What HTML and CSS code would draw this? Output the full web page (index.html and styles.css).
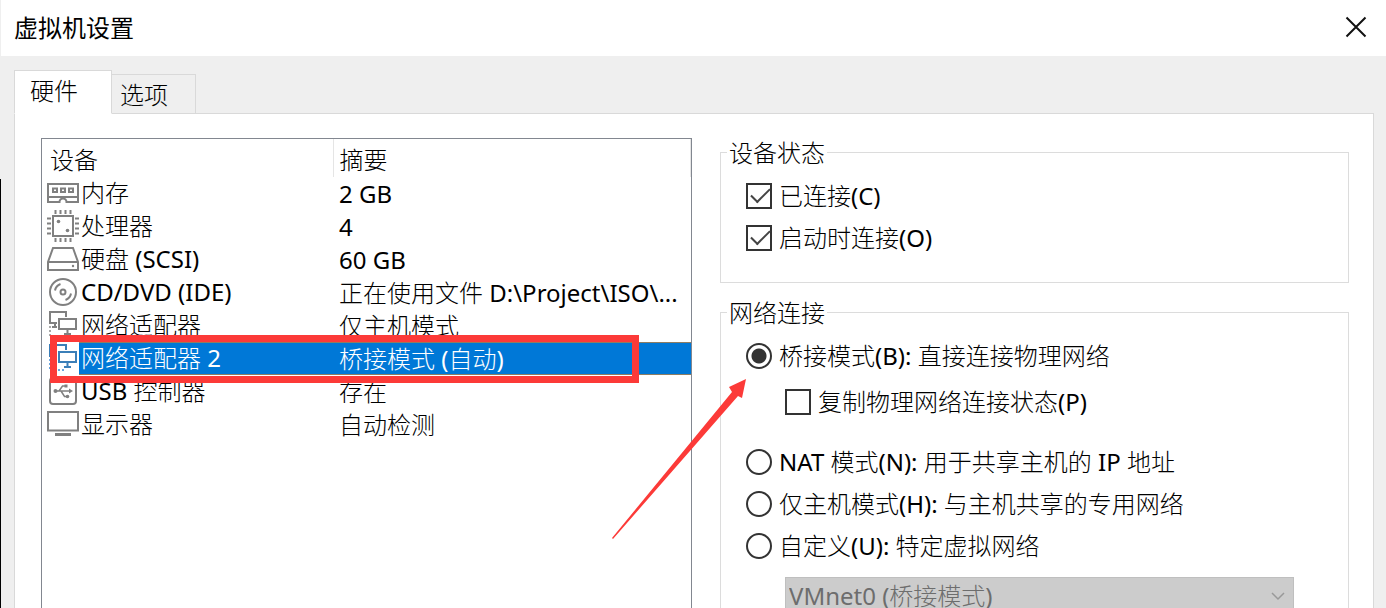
FILE: index.html
```html
<!DOCTYPE html>
<html lang="zh-CN">
<head>
<meta charset="UTF-8">
<meta name="viewport" content="width=device-width, initial-scale=1.0">
<title>虚拟机设置</title>
<link rel="stylesheet" href="styles.css">
</head>
<body>

<div class="dialog">
  <header class="titlebar">
    <h1>虚拟机设置</h1>
    <button type="button" class="close" aria-label="关闭">
      <svg width="22" height="22" viewBox="0 0 22 22"><path d="M1.5 1.5l19 19M20.5 1.5l-19 19" stroke="#111" stroke-width="2" fill="none"/></svg>
    </button>
  </header>

  <div class="tabs">
    <button type="button" class="tab active">硬件</button>
    <button type="button" class="tab">选项</button>
  </div>

  <main class="panel">
    <section class="devices">
      <table class="device-table">
        <thead>
          <tr><th>设备</th><th>摘要</th></tr>
        </thead>
        <tbody>
          <tr>
            <td><div class="device">
              <svg class="icon" viewBox="0 0 32 32" fill="none" stroke="#808080" stroke-width="2"><path d="M1 7h30v18H19.500a3.500 3.500 0 0 0-7 0H1zM1 20h30" /><path d="M6 11.500h4v3.500H6zM14 11.500h4v3.500h-4zM22 11.500h4v3.500h-4z"/></svg>
              <span class="name">内存</span></div></td>
            <td>2 GB</td>
          </tr>
          <tr>
            <td><div class="device">
              <svg class="icon" viewBox="0 0 32 32" fill="none" stroke="#808080" stroke-width="2"><path d="M6 6h20v20H6z"/><path d="M8.500 0v4M13.500 0v4M18.500 0v4M23.500 0v4M8.500 28v4M13.500 28v4M18.500 28v4M23.500 28v4M0 8.500h4M0 13.500h4M0 18.500h4M0 23.500h4M28 8.500h4M28 13.500h4M28 18.500h4M28 23.500h4"/><circle cx="11.500" cy="11.500" r="1.800" fill="#808080" stroke="none"/><circle cx="20.500" cy="20.500" r="1.800" fill="#808080" stroke="none"/></svg>
              <span class="name">处理器</span></div></td>
            <td>4</td>
          </tr>
          <tr>
            <td><div class="device">
              <svg class="icon" viewBox="0 0 32 32" fill="none" stroke="#808080" stroke-width="2"><path d="M6 5h20l5 14v8H1v-8zM1 19h30"/><circle cx="26" cy="23" r="1.200" fill="#808080" stroke="none"/></svg>
              <span class="name">硬盘 (SCSI)</span></div></td>
            <td>60 GB</td>
          </tr>
          <tr>
            <td><div class="device">
              <svg class="icon" viewBox="0 0 32 32" fill="none" stroke="#808080" stroke-width="2"><circle cx="16" cy="16" r="13"/><circle cx="16" cy="16" r="2.500"/><path d="M8 14.500A8.500 8.500 0 0 1 13.500 8M18.500 24a8.500 8.500 0 0 0 5.500-6.500"/></svg>
              <span class="name">CD/DVD (IDE)</span></div></td>
            <td>正在使用文件 D:\Project\ISO\...</td>
          </tr>
          <tr>
            <td><div class="device">
              <svg class="icon" viewBox="0 0 32 32" fill="none" stroke="#808080" stroke-width="2"><path d="M10 14H3V3h16v5"/><path d="M12 10h17v10H12zM20.500 20v5M17 25h7M8 14v4M5 18h5"/><path d="M3 17v11M3 28h16" stroke-dasharray="2 2" stroke="#a8a8a8"/></svg>
              <span class="name">网络适配器</span></div></td>
            <td>仅主机模式</td>
          </tr>
          <tr class="selected">
            <td><div class="device">
              <svg class="icon" viewBox="0 0 32 32" fill="none" stroke="#3b7fb8" stroke-width="2"><path d="M10 14H3V3h16v5"/><path d="M12 10h17v10H12zM20.500 20v5M17 25h7M8 14v4M5 18h5"/><path d="M3 17v11M3 28h16" stroke-dasharray="2 2" stroke="#6aa5dd"/></svg>
              <span class="name">网络适配器 2</span></div></td>
            <td>桥接模式 (自动)</td>
          </tr>
          <tr>
            <td><div class="device">
              <svg class="icon" viewBox="0 0 32 32" fill="none" stroke="#808080" stroke-width="2"><rect x="3" y="3" width="26" height="26" rx="3"/><path d="M8 16h15M12 16l3.500-5H18M14 16l3.500 5.500H20" stroke-width="1.500"/><path d="M22 13.500l4 2.500-4 2.500zM17.500 9.500h3v3h-3z" fill="#808080" stroke="none"/><circle cx="8.500" cy="16" r="2" fill="#808080" stroke="none"/><circle cx="20.500" cy="21.500" r="1.800" fill="#808080" stroke="none"/></svg>
              <span class="name">USB 控制器</span></div></td>
            <td>存在</td>
          </tr>
          <tr>
            <td><div class="device">
              <svg class="icon" viewBox="0 0 32 32" fill="none" stroke="#808080" stroke-width="2"><path d="M1 4h30v18.500H1z"/><path d="M8 26.500h16" stroke-width="3"/></svg>
              <span class="name">显示器</span></div></td>
            <td>自动检测</td>
          </tr>
        </tbody>
      </table>
      <div class="highlight"></div>
      <svg class="arrow" width="136" height="162" viewBox="0 0 136 162"><path d="M2 160L122 14l-3-5 17-8-4 19-4-2L3 161z" fill="#fc3a38"/></svg>
    </section>

    <section class="settings">
      <fieldset>
        <legend>设备状态</legend>
        <label class="option"><input type="checkbox" checked>已连接(C)</label>
        <label class="option"><input type="checkbox" checked>启动时连接(O)</label>
      </fieldset>

      <fieldset class="network">
        <legend>网络连接</legend>
        <label class="option"><input type="radio" name="net" checked>桥接模式(B): 直接连接物理网络</label>
        <label class="option nested"><input type="checkbox">复制物理网络连接状态(P)</label>
        <label class="option"><input type="radio" name="net">NAT 模式(N): 用于共享主机的 IP 地址</label>
        <label class="option"><input type="radio" name="net">仅主机模式(H): 与主机共享的专用网络</label>
        <label class="option"><input type="radio" name="net">自定义(U): 特定虚拟网络</label>
        <div class="select-wrap">
          <select aria-label="特定虚拟网络" disabled>
            <option>VMnet0 (桥接模式)</option>
          </select>
          <svg class="chevron" width="14" height="9" viewBox="0 0 14 9"><path d="M1 1l6 6 6-6" stroke="#999" stroke-width="1.500" fill="none"/></svg>
        </div>
      </fieldset>
    </section>
  </main>
</div>

</body>
</html>
```
FILE: styles.css
```css
* {
  box-sizing: border-box;
}

body {
  margin: 0;
  height: 100vh;
  overflow: hidden;
  background: linear-gradient(#efefef 179px, #000 179px);
  color: #000;
  font-family: "Noto Sans", "Noto Sans CJK SC Light", "Noto Sans CJK SC", sans-serif;
  font-size: 24px;
  line-height: 32px;
}

button, select {
  font: inherit;
  color: inherit;
}

.dialog {
  height: 100%;
  margin-left: 1px;
  display: flex;
  flex-direction: column;
  overflow: hidden;
  background: #efefef;
}

.titlebar {
  flex: none;
  height: 56px;
  padding: 0 19px 2px 13px;
  display: flex;
  align-items: center;
  justify-content: space-between;
  background: #fff;
}

.titlebar h1 {
  margin: 0;
  font-family: "Noto Sans CJK SC", sans-serif;
  font-size: 24px;
  font-weight: 400;
}

.close {
  display: flex;
  padding: 0;
  border: 0;
  background: none;
}

/* tabs */
.tabs {
  flex: none;
  display: flex;
  align-items: flex-end;
  height: 58px;
  padding-left: 13px;
}

.tab {
  height: 40px;
  padding: 1px 27px 0 8px;
  border: 1px solid #d9d9d9;
  border-left: 0;
  background: #efefef;
}

.tab.active {
  height: 44px;
  padding: 0 33px 2px 15px;
  border-left: 1px solid #d9d9d9;
  border-bottom-color: #fff;
  background: #fff;
  z-index: 1;
}

.panel {
  flex: 1;
  min-height: 0;
  margin: -1px 12px 0 13px;
  padding: 24px 24px 0 26px;
  border: 1px solid #d9d9d9;
  border-bottom: 0;
  background: #fff;
  display: grid;
  grid-template-columns: 651fr 629fr;
  gap: 28px;
}

/* device list */
.devices {
  position: relative;
  border: 1px solid #828790;
  border-bottom: 0;
}

.device-table {
  width: 100%;
  table-layout: fixed;
  border-collapse: collapse;
}

th {
  height: 38px;
  padding: 3px 8px 0;
  border-right: 1px solid #e5e5e5;
  font-weight: inherit;
  text-align: left;
}

th:first-child {
  width: 291px;
}

th:last-child {
  padding-left: 6px;
}

td {
  height: 33px;
  padding: 0 0 0 6px;
  white-space: nowrap;
}

td:first-child {
  padding-left: 5px;
}

.device {
  display: flex;
  height: 33px;
}

.icon {
  flex: none;
  width: 32px;
  height: 32px;
}

.name {
  flex: 1;
  padding-left: 2px;
}

.selected .name,
.selected td:last-child {
  background: #0078d7;
  color: #fff;
}

.selected .name,
.selected td:last-child {
  box-shadow: inset 0 -1px #8d7d63, inset 0 1px #8d7d63;
}

.highlight {
  position: absolute;
  top: 196px;
  left: 8px;
  right: 52px;
  height: 48px;
  border: 7px solid #fc3a38;
}

.arrow {
  position: absolute;
  top: 239px;
  right: -55px;
  z-index: 1;
}

/* right side groups */
fieldset {
  min-width: 0;
  margin: -3px 0 0;
  padding: 6px 25px 23px;
  border: 1px solid #dcdcdc;
}

fieldset.network {
  margin-top: 12px;
}

legend {
  height: 34px;
  margin-left: -19px;
  padding: 2px 2px 0;
}

.option {
  display: flex;
  align-items: center;
  gap: 7px;
  height: 42px;
}

.option.nested {
  margin: 4px 0 18px 39px;
}

.option input {
  appearance: none;
  flex: none;
  width: 26px;
  height: 26px;
  margin: 0;
  border: 2px solid #333;
  background: #fff;
}

.option input[type=radio] {
  border-radius: 50%;
}

.option input[type=radio]:checked {
  background: radial-gradient(circle, #333 7px, #fff 8px);
}

.option input[type=checkbox]:checked::before {
  content: "";
  display: block;
  width: 17px;
  height: 8px;
  margin: 3px 0 0 3px;
  border: solid #444;
  border-width: 0 0 2px 2px;
  transform: rotate(-45deg);
}

.select-wrap {
  position: relative;
  margin: 10px 29px 0 39px;
}

select {
  appearance: none;
  width: 100%;
  height: 38px;
  padding: 0 3px;
  border: 1px solid #bfbfbf;
  border-radius: 0;
  background: #ccc;
}

select:disabled {
  color: #6d6d6d;
  opacity: 1;
}

.chevron {
  position: absolute;
  top: 15px;
  right: 9px;
}
```
